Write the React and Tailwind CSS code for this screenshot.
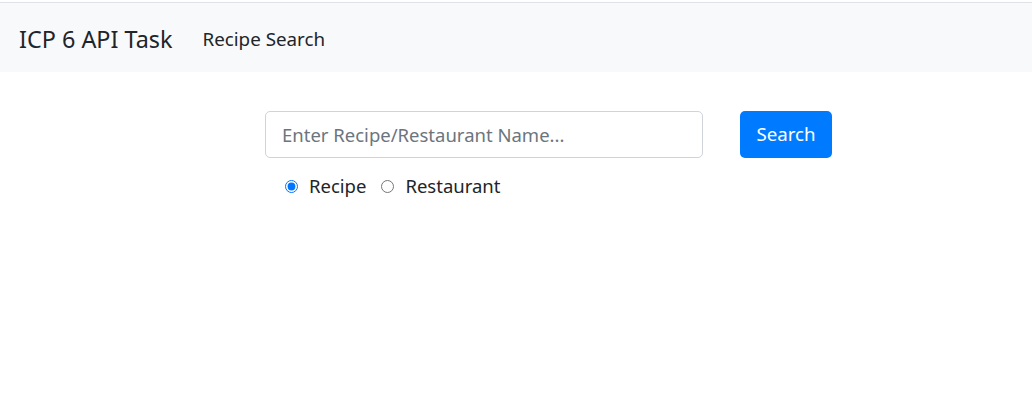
import React from "react";

export default function App() {
  const font = { fontFamily: '"Noto Sans", "Open Sans", sans-serif' };
  return (
    <div className="w-[1032px] h-[401px] bg-white text-[#212529]" style={font}>
      <div className="mt-[2px] border-t border-[#dee2e6] bg-[#f8f9fa] h-[70px] flex items-center px-[19px] pt-[2px]">
        <span className="text-[23.4px] leading-[30px] text-[#212529]">ICP 6 API Task</span>
        <span className="ml-[30px] text-[18.8px] leading-[24px] text-[#212529]">Recipe Search</span>
      </div>
      <div className="pl-[265px] pt-[39px]">
        <div className="flex items-start">
          <input
            type="text"
            placeholder="Enter Recipe/Restaurant Name..."
            className="w-[438px] h-[47px] border border-[#ced4da] rounded-[5px] px-[16px] text-[18.5px] placeholder:text-[#6c757d] outline-none"
          />
          <button className="ml-[37px] w-[92px] h-[47px] rounded-[5px] bg-[#007bff] text-white text-[18.7px]">
            Search
          </button>
        </div>
        <div className="flex items-center mt-[16px] pl-[20px] text-[18.5px] leading-[24px]">
          <label className="flex items-center">
            <input type="radio" name="t" defaultChecked className="w-[13px] h-[13px] m-0 accent-[#0075ff]" />
            <span className="ml-[11px]">Recipe</span>
          </label>
          <label className="flex items-center ml-[15px]">
            <input type="radio" name="t" className="w-[13px] h-[13px] m-0" />
            <span className="ml-[11px]">Restaurant</span>
          </label>
        </div>
      </div>
    </div>
  );
}
